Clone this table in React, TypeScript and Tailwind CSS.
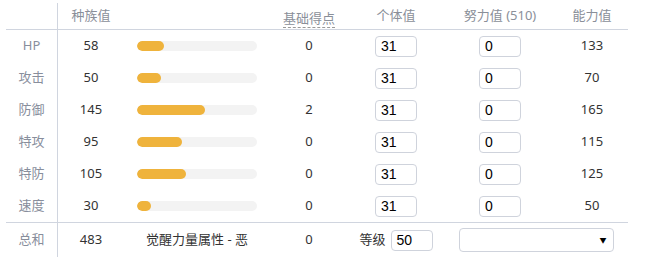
import React from "react";

const rows = [
  { name: "HP", base: 58, pt: 0, iv: 31, ev: 0, stat: 133 },
  { name: "攻击", base: 50, pt: 0, iv: 31, ev: 0, stat: 70 },
  { name: "防御", base: 145, pt: 2, iv: 31, ev: 0, stat: 165 },
  { name: "特攻", base: 95, pt: 0, iv: 31, ev: 0, stat: 115 },
  { name: "特防", base: 105, pt: 0, iv: 31, ev: 0, stat: 125 },
  { name: "速度", base: 30, pt: 0, iv: 31, ev: 0, stat: 50 },
];

const font = { fontFamily: '"Noto Sans", "Noto Sans CJK SC", sans-serif' };

function Box({ value }: { value: number }) {
  return (
    <div
      className="w-[42px] h-[21px] border border-[#cfd3dc] rounded-[4px] bg-white pl-[5px] flex items-center text-[14px] text-black"
      style={{ fontFamily: '"Liberation Sans", Arial, sans-serif' }}
    >
      {value}
    </div>
  );
}

export default function App() {
  return (
    <div className="w-[649px] h-[258px] bg-white overflow-hidden pt-[3px] pl-[6px]" style={font}>
      <div className="grid grid-cols-[52px_66px_146px_78px_96px_112px_72px] w-[622px] text-[13px] text-[#333]">
        {/* header */}
        <div className="h-[27px] border-r border-b border-[#d0d5df]" />
        <div className="h-[27px] border-b border-[#d0d5df] flex items-center justify-center text-[#8a8f99]">种族值</div>
        <div className="h-[27px] border-b border-[#d0d5df]" />
        <div className="h-[27px] border-b border-[#d0d5df] flex items-center justify-center text-[#8a8f99]">
          <span className="border-b border-dashed border-[#999] leading-[18px] mt-[4px]">基础得点</span>
        </div>
        <div className="h-[27px] border-b border-[#d0d5df] flex items-center justify-center text-[#8a8f99]">个体值</div>
        <div className="h-[27px] border-b border-[#d0d5df] flex items-center justify-center text-[#8a8f99]">努力值 (510)</div>
        <div className="h-[27px] border-b border-[#d0d5df] flex items-center justify-center text-[#8a8f99]">能力值</div>

        {rows.map((r) => (
          <React.Fragment key={r.name}>
            <div className="h-[32px] border-r border-[#d0d5df] flex items-center justify-center text-[#888e9c]">{r.name}</div>
            <div className="h-[32px] flex items-center justify-center">{r.base}</div>
            <div className="h-[32px] flex items-center justify-center">
              <div className="w-[120px] h-[10px] rounded-full bg-[#f3f3f3] overflow-hidden">
                <div className="h-full rounded-full bg-[#efb33c]" style={{ width: `${Math.round((r.base / 255) * 120)}px` }} />
              </div>
            </div>
            <div className="h-[32px] flex items-center justify-center">{r.pt}</div>
            <div className="h-[32px] flex items-center justify-center">
              <Box value={r.iv} />
            </div>
            <div className="h-[32px] flex items-center justify-center">
              <Box value={r.ev} />
            </div>
            <div className="h-[32px] flex items-center justify-center">{r.stat}</div>
          </React.Fragment>
        ))}

        {/* total row */}
        <div className="h-[35px] border-r border-t border-[#d0d5df] flex items-center justify-center text-[#888e9c]">总和</div>
        <div className="h-[35px] border-t border-[#d0d5df] flex items-center justify-center">483</div>
        <div className="h-[35px] border-t border-[#d0d5df] flex items-center justify-center">觉醒力量属性 - 恶</div>
        <div className="h-[35px] border-t border-[#d0d5df] flex items-center justify-center">0</div>
        <div className="h-[35px] border-t border-[#d0d5df] flex items-center justify-center gap-[5px]">
          <span>等级</span>
          <Box value={50} />
        </div>
        <div className="col-span-2 h-[35px] border-t border-[#d0d5df] flex items-center justify-center">
          <div className="w-[155px] h-[24px] border border-[#cfd3dc] rounded-[4px] bg-white flex items-center justify-end pr-[6px]">
            <span className="text-[7px] text-black leading-none">▼</span>
          </div>
        </div>
      </div>
    </div>
  );
}
